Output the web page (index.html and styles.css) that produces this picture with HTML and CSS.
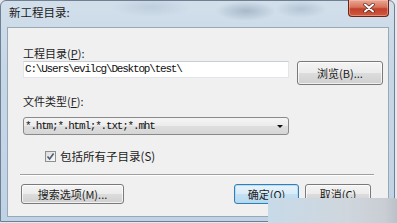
FILE: index.html
```html
<!DOCTYPE html>
<html lang="zh-CN">
<head>
<meta charset="utf-8">
<title>新工程目录</title>
<link rel="stylesheet" href="styles.css">
</head>
<body>
<div class="window">
  <div class="titlebar">
    <span class="title">新工程目录:</span>
    <button class="close" aria-label="关闭">
      <svg width="14" height="10" viewBox="0 0 14 10">
        <path d="M3 1.5 L11 8.5 M11 1.5 L3 8.5" stroke="#5a2418" stroke-width="3.4" stroke-linecap="round"/>
        <path d="M3 1.5 L11 8.5 M11 1.5 L3 8.5" stroke="#ffffff" stroke-width="2" stroke-linecap="round"/>
      </svg>
    </button>
  </div>
  <div class="client">
    <div class="label l1">工程目录(<u>P</u>):</div>
    <div class="row">
      <div class="textbox mono">C:\Users\evilcg\Desktop\test\</div>
      <button class="btn browse">浏览(B)...</button>
    </div>
    <div class="label l2">文件类型(<u>F</u>):</div>
    <div class="combo">
      <span class="mono">*.htm;*.html;*.txt;*.mht</span>
      <span class="arrow"></span>
    </div>
    <label class="check">
      <span class="box">
        <svg width="9" height="9" viewBox="0 0 9 9"><path d="M1.5 4.5 L3.6 7 L7.6 1.5" fill="none" stroke="#4b5d74" stroke-width="1.6"/></svg>
      </span>
      <span>包括所有子目录(S)</span>
    </label>
    <div class="sep"></div>
    <div class="buttons">
      <button class="btn search">搜索选项(M)...</button>
      <div class="right">
        <button class="btn ok">确定(O)</button>
        <button class="btn cancel">取消(C)</button>
      </div>
    </div>
  </div>
  <div class="watermark"></div>
</div>
</body>
</html>
```
FILE: styles.css
```css
html, body {
  margin: 0;
  padding: 0;
}
body {
  width: 397px;
  height: 223px;
  overflow: hidden;
  background: #e4e8ec;
  font-family: "Noto Sans CJK SC", "Liberation Sans", sans-serif;
  font-size: 11px;
  color: #1c1c1c;
}
.window {
  position: relative;
  box-sizing: border-box;
  width: 395px;
  height: 222px;
  border: 1px solid #6f8092;
  border-radius: 6px 6px 0 0;
  padding: 0 5px 4px 6px;
  display: flex;
  flex-direction: column;
  background:
    radial-gradient(ellipse 30px 10px at 245px 10px, rgba(120,140,160,0.45), rgba(120,140,160,0) 100%),
    radial-gradient(ellipse 26px 9px at 300px 8px, rgba(130,150,170,0.35), rgba(130,150,170,0) 100%),
    radial-gradient(ellipse 40px 10px at 150px 6px, rgba(150,170,190,0.3), rgba(150,170,190,0) 100%),
    linear-gradient(to bottom, #d2dfeb 0%, #c6d7e7 30%, #c0d3e6 100%);
}
.titlebar {
  height: 26px;
  display: flex;
  align-items: flex-start;
  justify-content: space-between;
}
.title {
  padding: 4px 0 0 2px;
  font-size: 11.5px;
  line-height: 14px;
  color: #1a1a1a;
}
.close {
  width: 41px;
  height: 17px;
  margin-top: -1px;
  padding: 0;
  border: 1px solid #6d2417;
  border-top: none;
  border-radius: 0 0 4px 4px;
  background: linear-gradient(to bottom, #e9a895 0%, #d8735c 45%, #c2402a 55%, #cf5a3e 100%);
  box-shadow: inset 0 0 0 1px rgba(255,200,190,0.45);
  display: flex;
  align-items: center;
  justify-content: center;
}
.client {
  flex: 1;
  box-sizing: border-box;
  border: 1px solid #9aa8b6;
  background: #f0f0f0;
  padding: 19px 4px 0 15px;
  display: flex;
  flex-direction: column;
  align-items: flex-start;
}
.label {
  line-height: 13px;
  height: 13px;
}
.l1 {
  margin-bottom: 1px;
}
.l2 {
  margin-top: 10px;
}
.mono {
  font-family: "Liberation Mono", monospace;
  font-size: 11px;
  letter-spacing: -1.2px;
  color: #111;
}
.row {
  display: flex;
  gap: 8px;
  align-items: flex-start;
  width: 360px;
}
.textbox {
  box-sizing: border-box;
  width: 266px;
  height: 17px;
  background: #ffffff;
  border: 1px solid #e2e6ea;
  border-top-color: #c9ced4;
  padding: 0 0 0 1px;
  line-height: 15px;
}
.btn {
  box-sizing: border-box;
  height: 20px;
  padding: 0;
  border: 1px solid #7a7a7a;
  border-radius: 3px;
  background: linear-gradient(to bottom, #f4f4f4 0%, #ececec 48%, #dcdcdc 52%, #d0d0d0 100%);
  box-shadow: inset 0 0 0 1px rgba(255,255,255,0.7);
  font-family: "Noto Sans CJK SC", "Liberation Sans", sans-serif;
  font-size: 11px;
  line-height: 16px;
  color: #1c1c1c;
}
.browse {
  width: 86px;
  height: 24px;
}
.combo {
  box-sizing: border-box;
  margin-top: 9px;
  width: 266px;
  height: 18px;
  border: 1px solid #8a8a8a;
  border-radius: 3px;
  background: linear-gradient(to bottom, #f5f5f5 0%, #ececec 48%, #dedede 52%, #d6d6d6 100%);
  display: flex;
  align-items: center;
  justify-content: space-between;
  padding: 0 5px 0 1px;
}
.arrow {
  width: 0;
  height: 0;
  border-left: 3px solid transparent;
  border-right: 3px solid transparent;
  border-top: 3px solid #111;
  margin-top: 1px;
}
.check {
  margin-top: 15px;
  margin-left: 22px;
  display: flex;
  align-items: center;
  gap: 4px;
  line-height: 13px;
  height: 13px;
  font-size: 11.5px;
}
.box {
  box-sizing: border-box;
  width: 11px;
  height: 11px;
  border: 1px solid #8e8f8f;
  background: linear-gradient(to bottom right, #dcdcdc, #fafafa);
  display: flex;
  align-items: center;
  justify-content: center;
}
.sep {
  margin-top: 11px;
  margin-left: -3px;
  width: 354px;
  height: 1px;
  background: #a0a0a0;
  border-bottom: 1px solid #ffffff;
}
.buttons {
  margin-top: 8px;
  margin-left: -2px;
  width: 350px;
  display: flex;
  justify-content: space-between;
}
.search {
  width: 103px;
}
.right {
  display: flex;
  gap: 6px;
}
.ok {
  width: 65px;
  border-color: #3d7bad;
  background: linear-gradient(to bottom, #e8f3fb 0%, #d9ecf8 48%, #c4e1f3 52%, #b6d9ee 100%);
  box-shadow: inset 0 0 0 1px rgba(160,220,250,0.8);
}
.cancel {
  width: 66px;
}
.watermark {
  position: absolute;
  left: 267px;
  top: 197px;
  width: 130px;
  height: 28px;
  border-radius: 2px 4px 0 0;
  background: linear-gradient(to right, #c7dae8 0%, #cbd8e3 30%, #cfd6dd 60%, #c9ced4 90%, #b9c0c7 100%);
}
```
